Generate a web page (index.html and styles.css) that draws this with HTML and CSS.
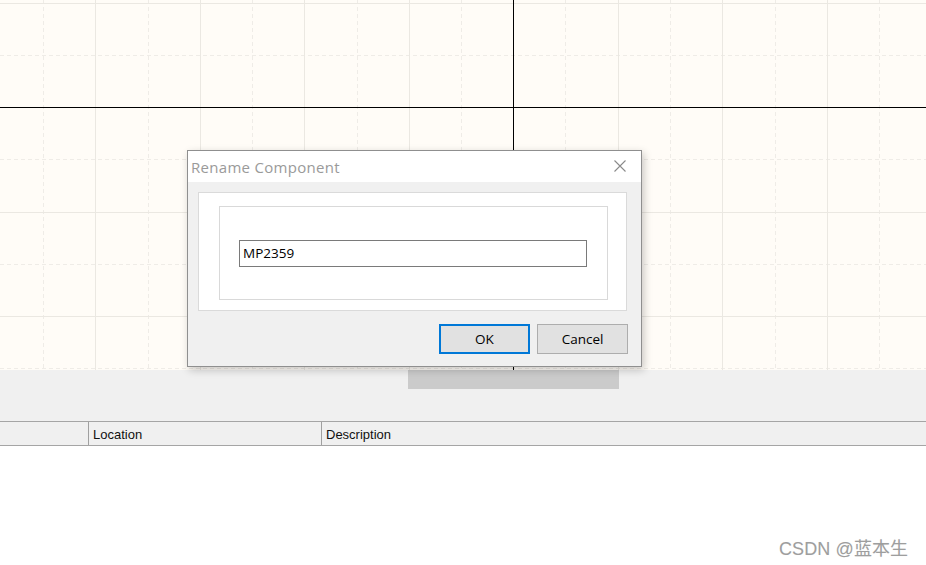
FILE: index.html
```html
<!DOCTYPE html>
<html>
<head>
<meta charset="utf-8">
<link rel="stylesheet" href="styles.css">
</head>
<body>
<div class="app">
  <div class="canvas">
    <svg class="grid" width="926" height="370" viewBox="0 0 926 370" shape-rendering="crispEdges">
      <g stroke="#efece7" stroke-width="1" stroke-dasharray="4 3">
        <line x1="43.5" y1="0" x2="43.5" y2="370"/>
        <line x1="148.5" y1="0" x2="148.5" y2="370"/>
        <line x1="252.5" y1="0" x2="252.5" y2="370"/>
        <line x1="357.5" y1="0" x2="357.5" y2="370"/>
        <line x1="461.5" y1="0" x2="461.5" y2="370"/>
        <line x1="565.5" y1="0" x2="565.5" y2="370"/>
        <line x1="670.5" y1="0" x2="670.5" y2="370"/>
        <line x1="775.5" y1="0" x2="775.5" y2="370"/>
        <line x1="879.5" y1="0" x2="879.5" y2="370"/>
        <line x1="0" y1="55.5" x2="926" y2="55.5"/>
        <line x1="0" y1="159.5" x2="926" y2="159.5"/>
        <line x1="0" y1="264.5" x2="926" y2="264.5"/>
        <line x1="0" y1="368.5" x2="926" y2="368.5"/>
      </g>
      <g stroke="#ebe8e2" stroke-width="1">
        <line x1="95.5" y1="0" x2="95.5" y2="370"/>
        <line x1="200.5" y1="0" x2="200.5" y2="370"/>
        <line x1="304.5" y1="0" x2="304.5" y2="370"/>
        <line x1="409.5" y1="0" x2="409.5" y2="370"/>
        <line x1="618.5" y1="0" x2="618.5" y2="370"/>
        <line x1="722.5" y1="0" x2="722.5" y2="370"/>
        <line x1="827.5" y1="0" x2="827.5" y2="370"/>
        <line x1="0" y1="3.5" x2="926" y2="3.5"/>
        <line x1="0" y1="212.5" x2="926" y2="212.5"/>
        <line x1="0" y1="316.5" x2="926" y2="316.5"/>
      </g>
      <g stroke="#000" stroke-width="1">
        <line x1="513.5" y1="0" x2="513.5" y2="370"/>
        <line x1="0" y1="107.5" x2="926" y2="107.5"/>
      </g>
    </svg>
  </div>
  <div class="toolbar">
    <div class="thumb"></div>
  </div>
  <div class="header">
    <div class="col col-first"></div>
    <div class="col col-loc">Location</div>
    <div class="col col-desc">Description</div>
  </div>
  <div class="list"></div>
  <div class="watermark">CSDN @蓝本生</div>

  <div class="dialog">
    <div class="titlebar">
      <span class="title">Rename Component</span>
      <svg class="close" width="12" height="12" viewBox="0 0 12 12">
        <path d="M0.5 0.5 L11.5 11.5 M11.5 0.5 L0.5 11.5" stroke="#8a8a8a" stroke-width="1.1" fill="none"/>
      </svg>
    </div>
    <div class="dbody">
      <div class="panel">
        <div class="frame">
          <div class="input">MP2359</div>
        </div>
      </div>
      <div class="buttons">
        <div class="btn btn-ok">OK</div>
        <div class="btn btn-cancel">Cancel</div>
      </div>
    </div>
  </div>
</div>
</body>
</html>
```
FILE: styles.css
```css
* { box-sizing: border-box; }
html, body { margin: 0; padding: 0; }
body {
  width: 926px;
  height: 565px;
  overflow: hidden;
  background: #ffffff;
  font-family: "Open Sans", "Noto Sans", sans-serif;
}
.app {
  position: relative;
  width: 926px;
  height: 565px;
  display: flex;
  flex-direction: column;
}
.canvas {
  height: 370px;
  background: #fffcf7;
  flex: none;
}
.grid { display: block; }
.toolbar {
  height: 51px;
  background: #f0f0f0;
  flex: none;
  padding-left: 408px;
}
.thumb {
  width: 211px;
  height: 19px;
  background: #cbcbcb;
}
.header {
  height: 25px;
  flex: none;
  display: flex;
  background: #f0f0f0;
  border-top: 1px solid #a5a5a5;
  border-bottom: 1px solid #a5a5a5;
  font-family: "Liberation Sans", Arial, sans-serif;
  font-size: 13px;
  color: #111;
}
.col {
  display: flex;
  align-items: center;
  padding-left: 4px;
  padding-top: 1px;
}
.col-first { width: 88px; padding: 0; }
.col-loc { width: 233px; border-left: 1px solid #a0a0a0; }
.col-desc { flex: 1; border-left: 1px solid #a0a0a0; }
.list { flex: 1; background: #fff; }
.watermark {
  position: absolute;
  left: 779px;
  top: 534px;
  font-family: "Liberation Sans", Arial, "Noto Sans CJK SC", sans-serif;
  font-size: 18px;
  color: #9e9e9e;
  text-shadow: 0 0 1px rgba(0,0,0,0.08);
  letter-spacing: 0.1px;
}
.dialog {
  position: absolute;
  left: 187px;
  top: 150px;
  width: 455px;
  height: 217px;
  border: 1px solid #8f8f8f;
  background: #f0f0f0;
  box-shadow: 2px 3px 8px rgba(0,0,0,0.22);
  display: flex;
  flex-direction: column;
}
.titlebar {
  height: 31px;
  background: #fff;
  display: flex;
  align-items: center;
  justify-content: space-between;
  padding: 0 15px 0 3px;
}
.title {
  font-size: 15px;
  color: #9a9a9a;
  letter-spacing: 0.3px;
}
.close { display: block; margin-top: -1px; }
.dbody {
  flex: 1;
  padding: 10px 14px 0 10px;
}
.panel {
  height: 119px;
  background: #fff;
  border: 1px solid #dadada;
  padding: 13px 18px 11px 20px;
}
.frame {
  height: 94px;
  border: 1px solid #d9d9d9;
  padding: 33px 20px 0 19px;
}
.input {
  height: 27px;
  border: 1px solid #7a7a7a;
  background: #fff;
  font-size: 13.5px;
  color: #000;
  padding: 2px 0 0 3px;
  line-height: 20px;
}
.buttons {
  display: flex;
  justify-content: flex-end;
  gap: 7px;
  margin-top: 13px;
}
.btn {
  width: 91px;
  height: 30px;
  background: #e1e1e1;
  display: flex;
  align-items: center;
  justify-content: center;
  font-size: 13.5px;
  color: #000;
}
.btn-ok { border: 2px solid #0078d7; }
.btn-cancel { border: 1px solid #adadad; margin-right: -1px; }
```
